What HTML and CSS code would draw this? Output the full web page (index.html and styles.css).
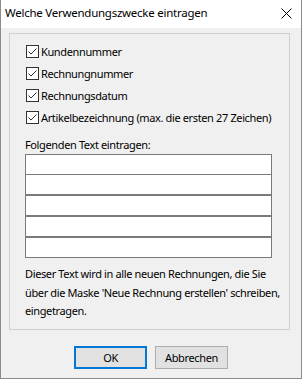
FILE: index.html
```html
<!DOCTYPE html>
<html>
<head>
<meta charset="utf-8">
<link rel="stylesheet" href="styles.css">
</head>
<body>
<div class="window">
  <div class="titlebar">
    <span class="title">Welche Verwendungszwecke eintragen</span>
    <svg class="close" width="11" height="11" viewBox="0 0 11 11"><path d="M0.5 0.5 L10.5 10.5 M10.5 0.5 L0.5 10.5" stroke="#000" stroke-width="1" fill="none"/></svg>
  </div>
  <div class="content">
    <div class="group">
      <div class="checks">
        <label class="check"><span class="box"><svg width="11" height="11" viewBox="0 0 11 11"><path d="M1.5 5.5 L4 8 L9.5 2.5" stroke="#333" stroke-width="1" fill="none"/></svg></span><span>Kundennummer</span></label>
        <label class="check"><span class="box"><svg width="11" height="11" viewBox="0 0 11 11"><path d="M1.5 5.5 L4 8 L9.5 2.5" stroke="#333" stroke-width="1" fill="none"/></svg></span><span>Rechnungnummer</span></label>
        <label class="check"><span class="box"><svg width="11" height="11" viewBox="0 0 11 11"><path d="M1.5 5.5 L4 8 L9.5 2.5" stroke="#333" stroke-width="1" fill="none"/></svg></span><span>Rechnungsdatum</span></label>
        <label class="check"><span class="box"><svg width="11" height="11" viewBox="0 0 11 11"><path d="M1.5 5.5 L4 8 L9.5 2.5" stroke="#333" stroke-width="1" fill="none"/></svg></span><span>Artikelbezeichnung (max. die ersten 27 Zeichen)</span></label>
      </div>
      <div class="label">Folgenden Text eintragen:</div>
      <div class="inputs">
        <div class="input"></div>
        <div class="input second"></div>
        <div class="input"></div>
        <div class="input"></div>
        <div class="input"></div>
      </div>
      <p class="desc">Dieser Text wird in alle neuen Rechnungen, die Sie<br>über die Maske 'Neue Rechnung erstellen' schreiben,<br>eingetragen.</p>
    </div>
    <div class="buttons">
      <button class="btn default">OK</button>
      <button class="btn">Abbrechen</button>
    </div>
  </div>
</div>
</body>
</html>
```
FILE: styles.css
```css
html, body {
  margin: 0;
  padding: 0;
}
body {
  font-family: "Noto Sans", "Open Sans", sans-serif;
  font-size: 11px;
  letter-spacing: -0.37px;
  color: #000;
}
.window {
  width: 302px;
  height: 379px;
  box-sizing: border-box;
  border: 1px solid #8c8c8c;
  border-top: none;
  background: #f0f0f0;
  display: flex;
  flex-direction: column;
  overflow: hidden;
}
.titlebar {
  height: 28px;
  background: #fff;
  display: flex;
  align-items: center;
  justify-content: space-between;
  padding: 0 9px 0 4px;
  flex-shrink: 0;
}
.title {
  font-size: 11.5px;
  letter-spacing: -0.25px;
  line-height: 16px;
  padding-bottom: 2px;
}
.close {
  display: block;
  margin-bottom: 2px;
}
.content {
  display: flex;
  flex-direction: column;
  padding: 5px 11px 0 8px;
}
.group {
  height: 297px;
  box-sizing: border-box;
  border: 1px solid #d0d0d0;
  padding: 11px 0 0 15px;
}
.checks {
  display: flex;
  flex-direction: column;
  gap: 9px;
  padding-left: 1px;
}
.check {
  display: flex;
  align-items: center;
  height: 13px;
  gap: 2px;
  line-height: 13px;
  white-space: nowrap;
}
.box {
  width: 13px;
  height: 13px;
  box-sizing: border-box;
  border: 1px solid #333;
  background: #fff;
  display: flex;
  align-items: center;
  justify-content: center;
  flex-shrink: 0;
}
.box svg {
  display: block;
}
.label {
  margin-top: 13px;
  line-height: 16px;
}
.inputs {
  margin-top: 1px;
  width: 247px;
  display: flex;
  flex-direction: column;
}
.input {
  height: 21px;
  box-sizing: border-box;
  border: 1px solid #7a7a7a;
  background: #fff;
}
.input.second {
  margin-top: -1px;
}
.desc {
  margin: 7px 0 0 0;
  line-height: 18.5px;
  white-space: nowrap;
}
.buttons {
  display: flex;
  justify-content: center;
  gap: 8px;
  margin-top: 16px;
  padding-left: 3px;
}
.btn {
  width: 73px;
  height: 23px;
  box-sizing: border-box;
  border: 1px solid #adadad;
  background: #e1e1e1;
  font-family: inherit;
  font-size: 11px;
  letter-spacing: -0.35px;
  color: #000;
  padding: 0;
}
.btn.default {
  border: 2px solid #0078d7;
}
```
